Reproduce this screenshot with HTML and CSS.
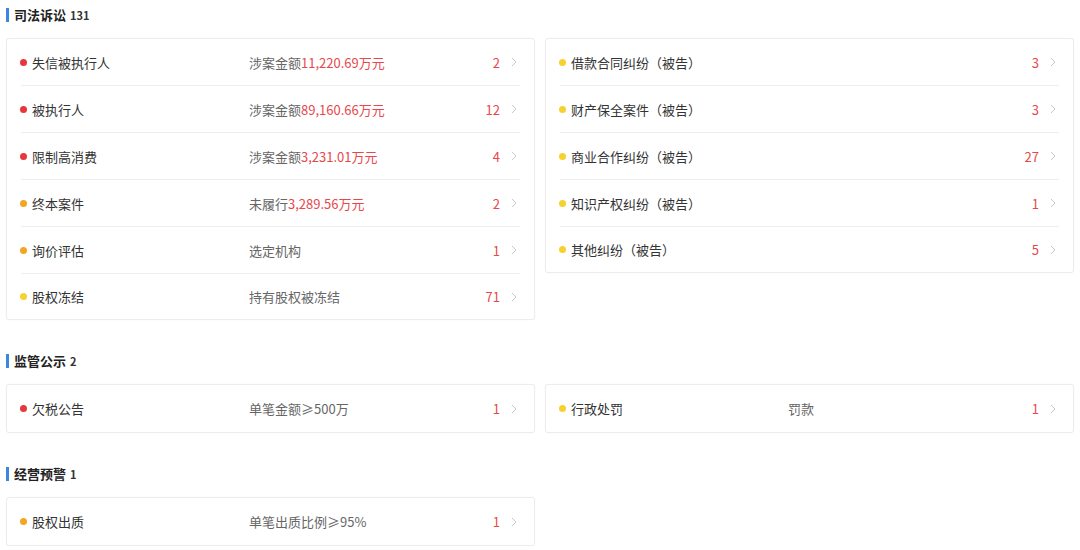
FILE: index.html
```html
<!DOCTYPE html>
<html lang="zh-CN">
<head>
  <meta charset="UTF-8" />
  <title>风险信息</title>
  <link rel="stylesheet" href="styles.css">
</head>
<body>
  <section class="section">
    <h3 class="section-title">司法诉讼<span class="count">131</span></h3>
    <div class="cards">
      <div class="card">
        <div class="row"><span class="dot red"></span><span class="name">失信被执行人</span><span class="desc">涉案金额<em>11,220.69万元</em></span><span class="num">2</span><svg class="arrow" viewBox="0 0 6 10"><polyline points="1,1 5,5 1,9" /></svg></div>
        <div class="row"><span class="dot red"></span><span class="name">被执行人</span><span class="desc">涉案金额<em>89,160.66万元</em></span><span class="num">12</span><svg class="arrow" viewBox="0 0 6 10"><polyline points="1,1 5,5 1,9" /></svg></div>
        <div class="row"><span class="dot red"></span><span class="name">限制高消费</span><span class="desc">涉案金额<em>3,231.01万元</em></span><span class="num">4</span><svg class="arrow" viewBox="0 0 6 10"><polyline points="1,1 5,5 1,9" /></svg></div>
        <div class="row"><span class="dot orange"></span><span class="name">终本案件</span><span class="desc">未履行<em>3,289.56万元</em></span><span class="num">2</span><svg class="arrow" viewBox="0 0 6 10"><polyline points="1,1 5,5 1,9" /></svg></div>
        <div class="row"><span class="dot orange"></span><span class="name">询价评估</span><span class="desc">选定机构</span><span class="num">1</span><svg class="arrow" viewBox="0 0 6 10"><polyline points="1,1 5,5 1,9" /></svg></div>
        <div class="row"><span class="dot yellow"></span><span class="name">股权冻结</span><span class="desc">持有股权被冻结</span><span class="num">71</span><svg class="arrow" viewBox="0 0 6 10"><polyline points="1,1 5,5 1,9" /></svg></div>
      </div>
      <div class="card">
        <div class="row"><span class="dot yellow"></span><span class="name wide">借款合同纠纷（被告）</span><span class="num">3</span><svg class="arrow" viewBox="0 0 6 10"><polyline points="1,1 5,5 1,9" /></svg></div>
        <div class="row"><span class="dot yellow"></span><span class="name wide">财产保全案件（被告）</span><span class="num">3</span><svg class="arrow" viewBox="0 0 6 10"><polyline points="1,1 5,5 1,9" /></svg></div>
        <div class="row"><span class="dot yellow"></span><span class="name wide">商业合作纠纷（被告）</span><span class="num">27</span><svg class="arrow" viewBox="0 0 6 10"><polyline points="1,1 5,5 1,9" /></svg></div>
        <div class="row"><span class="dot yellow"></span><span class="name wide">知识产权纠纷（被告）</span><span class="num">1</span><svg class="arrow" viewBox="0 0 6 10"><polyline points="1,1 5,5 1,9" /></svg></div>
        <div class="row"><span class="dot yellow"></span><span class="name wide">其他纠纷（被告）</span><span class="num">5</span><svg class="arrow" viewBox="0 0 6 10"><polyline points="1,1 5,5 1,9" /></svg></div>
      </div>
    </div>
  </section>

  <section class="section">
    <h3 class="section-title">监管公示<span class="count">2</span></h3>
    <div class="cards">
      <div class="card">
        <div class="row"><span class="dot red"></span><span class="name">欠税公告</span><span class="desc">单笔金额≥500万</span><span class="num">1</span><svg class="arrow" viewBox="0 0 6 10"><polyline points="1,1 5,5 1,9" /></svg></div>
      </div>
      <div class="card">
        <div class="row"><span class="dot yellow"></span><span class="name">行政处罚</span><span class="desc">罚款</span><span class="num">1</span><svg class="arrow" viewBox="0 0 6 10"><polyline points="1,1 5,5 1,9" /></svg></div>
      </div>
    </div>
  </section>

  <section class="section">
    <h3 class="section-title">经营预警<span class="count">1</span></h3>
    <div class="cards">
      <div class="card">
        <div class="row"><span class="dot orange"></span><span class="name">股权出质</span><span class="desc">单笔出质比例≥95%</span><span class="num">1</span><svg class="arrow" viewBox="0 0 6 10"><polyline points="1,1 5,5 1,9" /></svg></div>
      </div>
    </div>
  </section>
</body>
</html>
```

FILE: styles.css
```css
body {
  margin: 0;
  padding: 7px 6px 0;
  background: #ffffff;
  font-family: "Microsoft YaHei", "Noto Sans CJK SC", "Noto Sans", sans-serif;
  font-size: 13px;
  color: #333333;
}
.section {
  margin-bottom: 33px;
}
.section:last-child {
  margin-bottom: 0;
}
.section-title {
  display: flex;
  align-items: center;
  height: 16px;
  margin: 0 0 15px;
  font-size: 13px;
  font-weight: bold;
  color: #222222;
  line-height: 16px;
}
.section-title::before {
  content: "";
  width: 3px;
  height: 14px;
  margin-right: 5px;
  background: #3a86e0;
}
.count {
  margin-left: 4px;
  font-size: 11px;
  font-weight: bold;
  color: #333333;
}
.cards {
  display: grid;
  grid-template-columns: 1fr 1fr;
  gap: 10px;
  align-items: start;
}
.card {
  border: 1px solid #ececec;
  border-radius: 3px;
  background: #ffffff;
  box-shadow: 0 0 2px rgba(0, 0, 0, 0.03);
}
.row {
  display: flex;
  align-items: center;
  height: 46px;
  margin: 0 14px;
  border-bottom: 1px solid #eeeeee;
}
.row:last-child {
  border-bottom: none;
  height: 45px;
}
.row:only-child {
  height: 47px;
}
.dot {
  width: 7px;
  height: 7px;
  border-radius: 50%;
  margin-right: 5px;
  margin-left: -1px;
  flex-shrink: 0;
}
.dot.red { background: #e8363d; }
.dot.orange { background: #f5a524; }
.dot.yellow { background: #f6d22f; }
.name {
  width: 217px;
  flex-shrink: 0;
  color: #333333;
}
.name.wide {
  flex: 1;
}
.desc {
  flex: 1;
  color: #666666;
}
.desc em {
  font-style: normal;
  color: #e8474c;
}
.num {
  margin-left: auto;
  color: #e8474c;
  text-align: right;
}
.arrow {
  width: 6px;
  height: 10px;
  margin-left: 11px;
  margin-right: 3px;
  fill: none;
  stroke: #c8c8c8;
  stroke-width: 1;
}
```
